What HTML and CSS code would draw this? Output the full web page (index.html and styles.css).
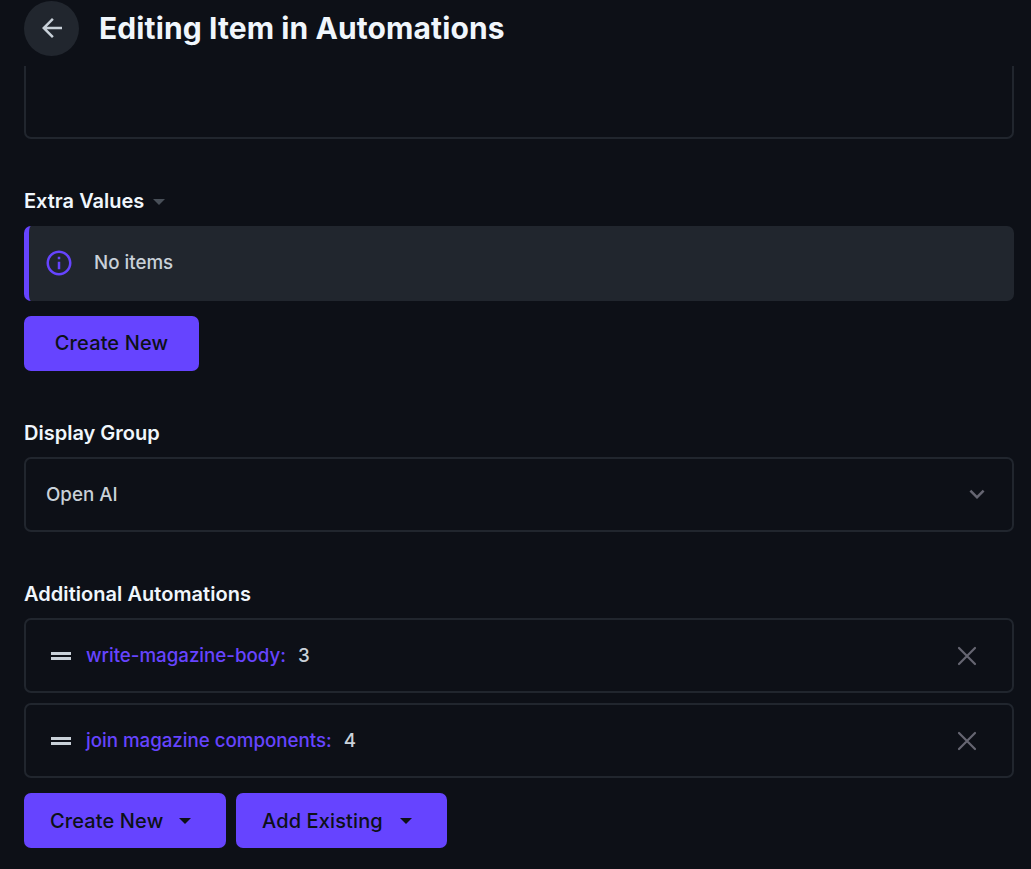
FILE: index.html
```html
<!DOCTYPE html>
<html lang="en">
<head>
<meta charset="utf-8">
<title>Editing Item in Automations</title>
<link rel="stylesheet" href="styles.css">
</head>
<body>
<header class="header">
  <button class="back" aria-label="Back">
    <svg width="30" height="30" viewBox="0 0 24 24" fill="currentColor"><path d="M20 11H7.83l5.59-5.59L12 4l-8 8 8 8 1.41-1.41L7.83 13H20z"/></svg>
  </button>
  <h1 class="title">Editing Item in Automations</h1>
</header>
<main class="form">
  <div class="textarea"></div>

  <section class="field">
    <h2 class="label"><span>Extra Values</span><span class="label-caret"></span></h2>
    <div class="notice">
      <svg class="info" width="30" height="30" viewBox="0 0 24 24" fill="currentColor"><path d="M11 7h2v2h-2zm0 4h2v6h-2zm1-9C6.480 2 2 6.480 2 12s4.480 10 10 10 10-4.480 10-10S17.520 2 12 2zm0 18c-4.410 0-8-3.590-8-8s3.590-8 8-8 8 3.590 8 8-3.590 8-8 8z"/></svg>
      <span>No items</span>
    </div>
    <div class="actions"><button class="btn btn-plain">Create New</button></div>
  </section>

  <section class="field">
    <h2 class="label">Display Group</h2>
    <div class="box select">
      <span>Open AI</span>
      <svg width="30" height="30" viewBox="0 0 24 24" fill="currentColor"><path d="M16.590 8.590L12 13.170 7.410 8.590 6 10l6 6 6-6z"/></svg>
    </div>
  </section>

  <section class="field">
    <h2 class="label label-wide">Additional Automations</h2>
    <div class="list">
      <div class="box item">
        <span class="handle"></span>
        <span class="name">write-magazine-body:</span><span>3</span>
        <svg class="close" width="30" height="30" viewBox="0 0 30 30"><path d="M7 7L23 23M23 7L7 23"/></svg>
      </div>
      <div class="box item">
        <span class="handle"></span>
        <span class="name">join magazine components:</span><span>4</span>
        <svg class="close" width="30" height="30" viewBox="0 0 30 30"><path d="M7 7L23 23M23 7L7 23"/></svg>
      </div>
    </div>
    <div class="actions">
      <button class="btn btn-create"><span>Create New</span><i class="caret"></i></button>
      <button class="btn btn-add"><span>Add Existing</span><i class="caret"></i></button>
    </div>
  </section>
</main>
</body>
</html>
```
FILE: styles.css
```css
* { box-sizing: border-box; }
body {
  margin: 0;
  height: 869px;
  overflow: hidden;
  background: #0d1017;
  color: #c9d1d9;
  font: 500 18.750px/28px Inter, sans-serif;
}
button { border: 0; padding: 0; font: inherit; }
.header {
  display: flex;
  align-items: center;
  gap: 20px;
  height: 66px;
  padding: 1px 24px 10px;
}
.back {
  display: flex;
  align-items: center;
  justify-content: center;
  width: 55px;
  height: 55px;
  padding-bottom: 1px;
  border-radius: 50%;
  background: #21262e;
  color: #c9d1d9;
}
.title {
  margin: 0;
  padding-bottom: 2px;
  color: #f0f6fc;
  font-size: 30px;
  font-weight: 700;
  line-height: 40px;
  letter-spacing: 0.1px;
}
.form { padding: 0 17px 0 24px; }
.textarea {
  height: 73px;
  border: 2px solid #21262e;
  border-top: 0;
  border-radius: 0 0 7px 7px;
}
.field { padding-top: 48px; }
.label {
  display: flex;
  align-items: center;
  gap: 9px;
  height: 28px;
  margin: 0 0 10px;
  color: #f0f6fc;
  font-size: 20px;
  font-weight: 600;
}
.label-wide { letter-spacing: 0.05px; }
.textarea + .field .label { margin-bottom: 11px; }
.label-caret {
  margin-top: 1px;
  border: 6.500px solid transparent;
  border-top-color: #484f58;
  border-bottom: 0;
}
.notice {
  display: flex;
  align-items: center;
  gap: 20px;
  height: 75px;
  padding: 0 15px 2px;
  border-radius: 7px;
  border-left: 5px solid #6644ff;
  background: #21262e;
}
.info { color: #6644ff; }
.actions { display: flex; gap: 10px; margin-top: 15px; }
.btn {
  display: flex;
  align-items: center;
  height: 55px;
  border-radius: 7px;
  background: #6644ff;
  color: #0d1117;
  font-size: 20px;
  letter-spacing: 0.12px;
}
.btn-plain { width: 175px; padding-bottom: 2px; justify-content: center; }
.btn-create { width: 202px; padding-left: 26px; gap: 16px; }
.btn-add { width: 211px; padding-left: 26px; gap: 17px; }
.caret {
  margin-top: 1px;
  border: 6px solid transparent;
  border-top-color: #0d1117;
  border-bottom: 0;
}
.box {
  display: flex;
  align-items: center;
  height: 75px;
  border: 2px solid #21262e;
  border-radius: 7px;
}
.select { justify-content: space-between; padding: 0 20px; }
.select svg { margin-bottom: 1px; color: #666672; }
.list { display: flex; flex-direction: column; gap: 10px; }
.item { padding: 0 30px 0 25px; }
.handle {
  width: 20px;
  height: 8px;
  margin-right: 15px;
  border: solid #c9d1d9;
  border-width: 3px 0;
}
.name { margin-right: 12px; color: #6644ff; letter-spacing: -0.03px; }
.close {
  margin-left: auto;
  fill: none;
  stroke: #666672;
  stroke-width: 2.200;
  stroke-linecap: round;
}
```
